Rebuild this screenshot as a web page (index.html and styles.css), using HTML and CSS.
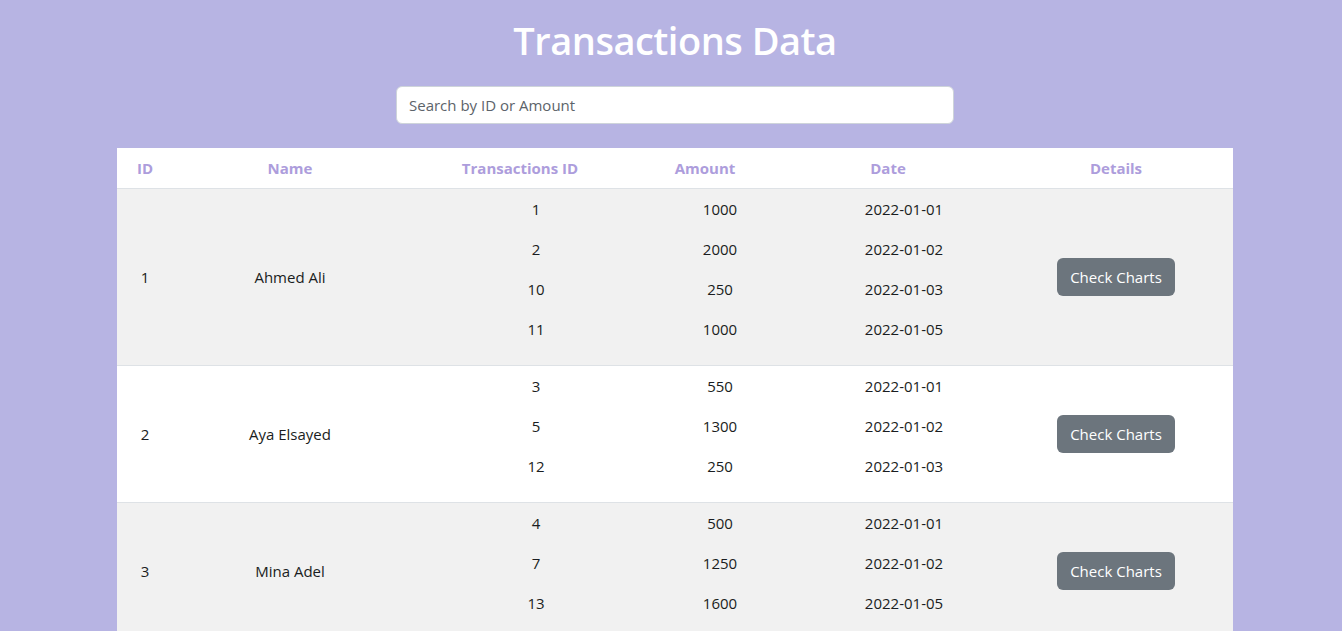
FILE: index.html
```html
<!DOCTYPE html>
<html lang="en">
<head>
<meta charset="utf-8">
<title>Transactions Data</title>
<link rel="stylesheet" href="styles.css">
</head>
<body>
<div class="container">
  <h1 class="title">Transactions Data</h1>
  <div class="search-wrap">
    <input class="search" type="text" placeholder="Search by ID or Amount">
  </div>
  <div class="table">
    <div class="thead">
      <div class="th">ID</div>
      <div class="th">Name</div>
      <div class="th">Transactions ID</div>
      <div class="th">Amount</div>
      <div class="th">Date</div>
      <div class="th">Details</div>
    </div>

    <div class="row striped">
      <div class="cell">1</div>
      <div class="cell">Ahmed Ali</div>
      <div class="nested">
        <div class="sub">1</div><div class="sub">1000</div><div class="sub">2022-01-01</div>
        <div class="sub">2</div><div class="sub">2000</div><div class="sub">2022-01-02</div>
        <div class="sub">10</div><div class="sub">250</div><div class="sub">2022-01-03</div>
        <div class="sub">11</div><div class="sub">1000</div><div class="sub">2022-01-05</div>
      </div>
      <div class="cell"><button class="btn">Check Charts</button></div>
    </div>

    <div class="row">
      <div class="cell">2</div>
      <div class="cell">Aya Elsayed</div>
      <div class="nested">
        <div class="sub">3</div><div class="sub">550</div><div class="sub">2022-01-01</div>
        <div class="sub">5</div><div class="sub">1300</div><div class="sub">2022-01-02</div>
        <div class="sub">12</div><div class="sub">250</div><div class="sub">2022-01-03</div>
      </div>
      <div class="cell"><button class="btn">Check Charts</button></div>
    </div>

    <div class="row striped">
      <div class="cell">3</div>
      <div class="cell">Mina Adel</div>
      <div class="nested">
        <div class="sub">4</div><div class="sub">500</div><div class="sub">2022-01-01</div>
        <div class="sub">7</div><div class="sub">1250</div><div class="sub">2022-01-02</div>
        <div class="sub">13</div><div class="sub">1600</div><div class="sub">2022-01-05</div>
      </div>
      <div class="cell"><button class="btn">Check Charts</button></div>
    </div>
  </div>
</div>
</body>
</html>
```

FILE: styles.css
```css
html, body {
  margin: 0;
  padding: 0;
}

body {
  background: #b7b4e3;
  font-family: "Open Sans", "Noto Sans", Arial, sans-serif;
  font-size: 16px;
  color: #1a1d21;
  min-height: 631px;
}

.container {
  width: 1116px;
  margin-left: 117px;
}

.title {
  margin: 16px 0 0;
  height: 48px;
  line-height: 48px;
  text-align: center;
  color: #ffffff;
  font-size: 38px;
  font-weight: 600;
  letter-spacing: -0.5px;
}

.search-wrap {
  display: flex;
  justify-content: center;
  margin-top: 22px;
}

.search {
  box-sizing: border-box;
  width: 558px;
  height: 38px;
  padding: 6px 12px;
  border: 1px solid #ced4da;
  border-radius: 6px;
  background: #fff;
  font-family: inherit;
  font-size: 15px;
  color: #212529;
  outline: none;
}

.search::placeholder {
  color: #5c636a;
}

.table {
  margin-top: 24px;
  background: #fff;
}

.thead {
  display: grid;
  grid-template-columns: 56px 234px 226px 144px 222px 234px;
  height: 40px;
  border-bottom: 1px solid #dee2e6;
}

.th {
  display: flex;
  align-items: center;
  justify-content: center;
  font-weight: 700;
  font-size: 15px;
  color: #ad9ddc;
}

.row {
  display: grid;
  grid-template-columns: 56px 234px 592px 234px;
  border-bottom: 1px solid #dee2e6;
  background: #fff;
}

.row.striped {
  background: #f1f1f1;
}

.cell {
  display: flex;
  align-items: center;
  justify-content: center;
  font-size: 15px;
}

.nested {
  display: grid;
  grid-template-columns: 184px 184px 184px;
  grid-auto-rows: 40px;
  padding: 0 0 16px 37px;
}

.sub {
  display: flex;
  align-items: center;
  justify-content: center;
  font-size: 15px;
}

.btn {
  box-sizing: border-box;
  height: 38px;
  padding: 0 13px;
  border: 0;
  border-radius: 6px;
  background: #6c757d;
  color: #fff;
  font-family: inherit;
  font-size: 15px;
  cursor: pointer;
}
```
